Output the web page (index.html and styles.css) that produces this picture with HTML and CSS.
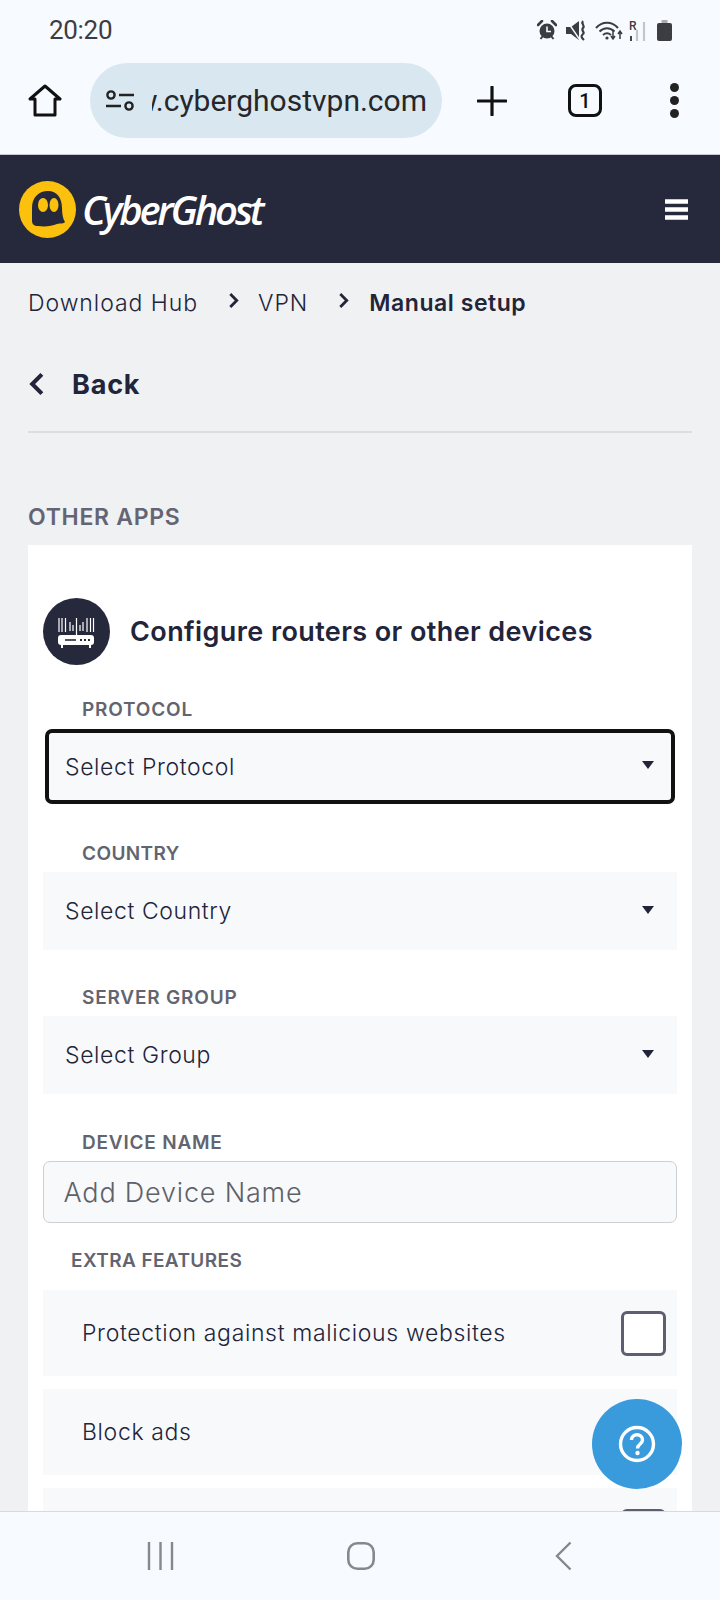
FILE: index.html
```html
<!DOCTYPE html>
<html lang="en">
<head>
<meta charset="utf-8">
<title>CyberGhost - Manual setup</title>
<link rel="stylesheet" href="styles.css">
</head>
<body>
<div class="chrome">
  <div class="status">
    <span class="time">20:20</span>
    <div class="status-icons">
      <svg class="ic-alarm" viewBox="0 0 20 20"><circle cx="10" cy="11" r="7.5" fill="#3c3d42"/><path d="M1 5l4-4M19 5l-4-4" stroke="#3c3d42" stroke-width="2.6" stroke-linecap="round"/><path d="M3.5 19l2-2.5M16.5 19l-2-2.5" stroke="#3c3d42" stroke-width="2"/><path d="M10 6.5V11.5H14" fill="none" stroke="#f7faff" stroke-width="1.6"/></svg>
      <svg class="ic-mute" viewBox="0 0 21 21"><path d="M0 7h5l8-6v19l-8-6H0z" fill="#3c3d42"/><path d="M1 1l13 19" stroke="#f7faff" stroke-width="1.400"/><path d="M17 1c-2.500 3 2.500 4 0 7s2.500 4 0 6-1.500 4 1 6" fill="none" stroke="#3c3d42" stroke-width="2.200"/></svg>
      <svg class="ic-wifi" viewBox="0 0 28 21"><path d="M1 8C7 1 17 1 23 8" fill="none" stroke="#3c3d42" stroke-width="2"/><path d="M4.500 11.500C9 7 15 7 19.500 11.500" fill="none" stroke="#3c3d42" stroke-width="2"/><path d="M8 15c3-2.500 5-2.500 8 0" fill="none" stroke="#3c3d42" stroke-width="2"/><circle cx="12" cy="18" r="1.600" fill="#3c3d42"/><path d="M18 11v7M16 16l2 3 2-3M25 19v-7M23 14l2-3 2 3" fill="none" stroke="#3c3d42" stroke-width="1.500"/></svg>
      <div class="signal">
        <span class="roam">R</span>
        <svg class="ic-bars" viewBox="0 0 18 20"><path d="M2 20v-5" stroke="#44454a" stroke-width="2"/><path d="M8 20v-11M15 20V1" stroke="#c2c5ca" stroke-width="2.200"/></svg>
      </div>
      <svg class="ic-batt" viewBox="0 0 15 21"><path d="M4.500 0h6v3h-6z" fill="#a9abae"/><rect x="0" y="3" width="15" height="18" rx="2" fill="#3c3d42"/></svg>
    </div>
  </div>
  <div class="toolbar">
    <svg class="ic-home" viewBox="0 0 34 33"><path d="M7 31V15H2L17 2l15 13h-5v16z" fill="none" stroke="#111" stroke-width="3" stroke-linejoin="round"/></svg>
    <div class="pill">
      <svg class="ic-tune" viewBox="0 0 28 21"><circle cx="5" cy="5" r="3.600" fill="none" stroke="#222" stroke-width="2.400"/><path d="M13 5h15M0 16h15" stroke="#222" stroke-width="2.400"/><circle cx="23" cy="16" r="3.600" fill="none" stroke="#222" stroke-width="2.400"/></svg>
      <div class="url"><span>www.cyberghostvpn.com</span></div>
    </div>
    <svg class="ic-plus" viewBox="0 0 30 30"><path d="M15 1v28M1 15h28" stroke="#111" stroke-width="3.200" stroke-linecap="round"/></svg>
    <div class="tabs">1</div>
    <div class="dots"><i></i><i></i><i></i></div>
  </div>
</div>

<header class="site">
  <svg class="logo" viewBox="0 0 57 57"><circle cx="28.500" cy="28.500" r="28.500" fill="#fcc10c"/><path d="M13 27C13 16 20 10 29 10c9 0 14 7 14 17 0 6 1 11 3 14-1 2-5 1-8 2-5 2-12 3-19 2-4 0-6-2-6-5z" fill="#26283c"/><ellipse cx="24" cy="24" rx="5" ry="7" fill="#fcc10c"/><ellipse cx="35" cy="24" rx="4.500" ry="7" fill="#fcc10c"/></svg>
  <span class="brand">CyberGhost</span>
  <svg class="burger" viewBox="0 0 23 21"><path d="M0 2.500h23M0 10.500h23M0 18.500h23" stroke="#fff" stroke-width="4.400"/></svg>
</header>

<main>
  <nav class="crumbs">
    <span>Download Hub</span>
    <svg class="chev c1" viewBox="0 0 10 14"><path d="M2 1l6 6-6 6" fill="none" stroke="#22243a" stroke-width="2.600"/></svg>
    <span>VPN</span>
    <svg class="chev c2" viewBox="0 0 10 14"><path d="M2 1l6 6-6 6" fill="none" stroke="#22243a" stroke-width="2.600"/></svg>
    <strong>Manual setup</strong>
  </nav>
  <div class="back">
    <svg class="ic-back" viewBox="0 0 14 22"><path d="M12 2L3 11l9 9" fill="none" stroke="#22243a" stroke-width="3.800"/></svg>
    <span>Back</span>
  </div>
  <h2 class="section">OTHER APPS</h2>
  <section class="card">
    <div class="card-head">
      <svg class="ic-router" viewBox="0 0 67 67">
        <circle cx="33.500" cy="33.500" r="33.500" fill="#26283c"/>
        <path d="M16 20v14M19 20v14M22.500 20v14M27 24v9M30 27v6M33.500 20v17M37 27v6M40 24v9M44 20v14M47.500 20v14M50.500 20v14" stroke="#fff" stroke-width="1.200"/>
        <rect x="15" y="37" width="36" height="10" rx="3" fill="#fff"/>
        <path d="M19 47v3M47 47v3" stroke="#fff" stroke-width="2"/>
        <path d="M22 42h11" stroke="#26283c" stroke-width="1.600"/>
        <path d="M37 42h2M41 42h2M45 42h2" stroke="#26283c" stroke-width="2"/>
      </svg>
      <h3>Configure routers or other devices</h3>
    </div>

    <div class="label first">PROTOCOL</div>
    <div class="select focus"><span>Select Protocol</span><i class="caret"></i></div>

    <div class="label after-focus">COUNTRY</div>
    <div class="select"><span>Select Country</span><i class="caret"></i></div>

    <div class="label">SERVER GROUP</div>
    <div class="select"><span>Select Group</span><i class="caret"></i></div>

    <div class="label device">DEVICE NAME</div>
    <div class="input">Add Device Name</div>

    <div class="extra">EXTRA FEATURES</div>
    <div class="row"><span>Protection against malicious websites</span><i class="check"></i></div>
    <div class="row"><span>Block ads</span><i class="check"></i></div>
    <div class="row"><span></span><i class="check"></i></div>
  </section>
</main>

<button class="fab" aria-label="Help">
  <svg viewBox="0 0 38 38"><circle cx="19" cy="19" r="16.500" fill="none" stroke="#fff" stroke-width="3.400"/><path d="M13.500 15c0-7 11-7 11 0 0 4-5 4-5 8.500" fill="none" stroke="#fff" stroke-width="3.400"/><circle cx="19.500" cy="28" r="2.200" fill="#fff"/></svg>
</button>

<footer class="sysnav">
  <svg class="n-recent" viewBox="0 0 27 28"><path d="M2 0v28M13.500 0v28M25 0v28" stroke="#85888d" stroke-width="2.400"/></svg>
  <svg class="n-home" viewBox="0 0 28 28"><rect x="1.300" y="1.300" width="25.400" height="25.400" rx="9" fill="none" stroke="#85888d" stroke-width="2.600"/></svg>
  <svg class="n-back" viewBox="0 0 17 30"><path d="M15.500 1.500L2 15l13.500 13.500" fill="none" stroke="#85888d" stroke-width="2.400"/></svg>
</footer>
</body>
</html>
```

FILE: styles.css
```css
* { box-sizing: border-box; }
html, body { margin: 0; height: 1600px; }
body {
  position: relative;
  width: 720px;
  overflow: hidden;
  display: flex;
  flex-direction: column;
  background: #f0f1f3;
  font-family: Inter, "Noto Sans", sans-serif;
  color: #22243a;
}
svg { display: block; flex: none; }

/* browser chrome */
.chrome { background: #f7faff; height: 155px; border-bottom: 1px solid #c6c9d0; flex: none; }
.status { height: 63px; display: flex; align-items: center; padding: 0 48px 3px 49px; justify-content: space-between; }
.time { font: 400 26px Roboto, sans-serif; letter-spacing: -0.3px; color: #3c3d42; }
.status-icons { display: flex; align-items: flex-start; height: 21px; }
.ic-alarm { width: 20px; height: 20px; }
.ic-mute { width: 21px; height: 21px; margin-left: 9px; }
.ic-wifi { width: 28px; height: 21px; margin-left: 8px; }
.signal { position: relative; width: 25px; height: 21px; margin-left: 3px; }
.roam { position: absolute; left: 3px; top: -1px; font: 500 12px Roboto, sans-serif; color: #3c3d42; }
.ic-bars { position: absolute; left: 3px; top: 1px; width: 18px; height: 20px; }
.ic-batt { width: 15px; height: 21px; margin-left: 6px; }

.toolbar { display: flex; align-items: center; height: 75px; padding-left: 28px; }
.ic-home { width: 34px; height: 33px; }
.pill {
  width: 352px; height: 75px; margin-left: 28px; border-radius: 38px; background: #d9e7f0;
  display: flex; align-items: center; padding-left: 16px;
}
.ic-tune { width: 28px; height: 21px; }
.url { margin-left: 18px; width: 275px; display: flex; justify-content: flex-end; overflow: hidden; font: 400 30px Roboto, sans-serif; color: #26272b; white-space: nowrap; }
.url span { flex: none; }
.ic-plus { width: 30px; height: 30px; margin-left: 35px; }
.tabs {
  width: 34px; height: 33px; margin-left: 61px; border: 3.5px solid #111; border-radius: 8px;
  display: flex; align-items: center; justify-content: center; font: 500 20px Roboto, sans-serif; color: #111;
}
.dots { margin-left: 68px; display: flex; flex-direction: column; gap: 4px; }
.dots i { display: block; width: 9px; height: 9px; border-radius: 50%; background: #222; }

/* site header */
.site { flex: none; height: 108px; background: #26283c; display: flex; align-items: center; padding: 0 32px 0 19px; }
.logo { width: 57px; height: 57px; }
.brand { margin-left: 6px; font: italic 600 40px "Open Sans", sans-serif; letter-spacing: -3.200px; color: #fff; }
.burger { width: 23px; height: 21px; margin-left: auto; }

/* content */
main { flex: 1; min-height: 0; overflow: hidden; padding: 0 28px; }
.crumbs { height: 80px; display: flex; align-items: center; font-size: 23px; font-weight: 300; letter-spacing: 0.95px; color: #22243a; }
.crumbs strong { font-weight: 600; letter-spacing: 0.55px; color: #22243a; }
.chev { width: 11px; height: 15px; }
.c1 { margin: -6px 19px 0 30px; }
.c2 { margin: -6px 20px 0 30px; }
.back { height: 90px; padding-bottom: 6px; border-bottom: 2px solid #dcdde0; display: flex; align-items: center; font-size: 27px; font-weight: 700; letter-spacing: 0.800px; }
.ic-back { width: 15px; height: 24px; margin: 0 28px 0 1px; }
.section { margin: 70px 0 14px; height: 28px; line-height: 28px; font-size: 23px; font-weight: 600; letter-spacing: 0.700px; color: #636573; }
.card { background: #fff; padding: 53px 15px 0; height: 1000px; }
.card-head { display: flex; align-items: center; height: 67px; }
.ic-router { width: 67px; height: 67px; }
.card-head h3 { margin: 0 0 0 20px; font-size: 27px; font-weight: 600; letter-spacing: 0.400px; color: #22243a; white-space: nowrap; }
.label { height: 24px; line-height: 24px; margin: 36px 0 6px 39px; font-size: 19px; font-weight: 600; letter-spacing: 0.800px; color: #62646f; }
.label.first { margin-top: 33px; margin-bottom: 7px; }
.label.after-focus { margin-top: 38px; letter-spacing: 0.400px; }
.label.device { margin-top: 37px; }
.select {
  height: 78px; background: #f8f9fb; padding: 0 23px 0 22px; display: flex; align-items: center; justify-content: space-between;
  font-size: 23px; font-weight: 300; letter-spacing: 0.600px; color: #22243a;
}
.select.focus { height: 75px; margin: 0 2px; padding: 0 17px 0 16px; border: 4px solid #111; border-radius: 7px; }
.caret { width: 0; height: 0; border: 6.500px solid transparent; border-top: 8px solid #22243a; border-bottom: 0; margin-bottom: 3px; }
.input {
  height: 62px; background: #f8f9fb; border: 1.500px solid #cdcfd3; border-radius: 7px; padding: 0 19.500px;
  display: flex; align-items: center; font-size: 27px; font-weight: 300; letter-spacing: 0.800px; color: #5f6169;
}
.extra { height: 24px; line-height: 24px; margin: 26px 0 17px 28px; font-size: 19px; font-weight: 600; letter-spacing: 0.400px; color: #62646f; }
.row {
  height: 86px; margin-bottom: 13px; background: #f8f9fb; padding: 0 11px 0 39px; display: flex; align-items: center;
  justify-content: space-between; font-size: 23px; font-weight: 300; letter-spacing: 0.650px; color: #22243a;
}
.check { width: 45px; height: 45px; background: #fff; border: 3.500px solid #5d5f70; border-radius: 6px; }

.fab {
  position: absolute; left: 592px; top: 1399px; width: 90px; height: 90px; padding: 0; border: 0; border-radius: 50%;
  background: #3a9bdc; display: flex; align-items: center; justify-content: center;
}
.fab svg { width: 38px; height: 38px; }

.sysnav {
  flex: none; height: 89px; background: #f7faff; border-top: 1px solid #d8dadd; display: flex; align-items: center;
  padding: 0 0 0 147px;
}
.n-recent { width: 27px; height: 28px; }
.n-home { width: 28px; height: 28px; margin-left: 173px; }
.n-back { width: 17px; height: 30px; margin-left: 180px; }
```
